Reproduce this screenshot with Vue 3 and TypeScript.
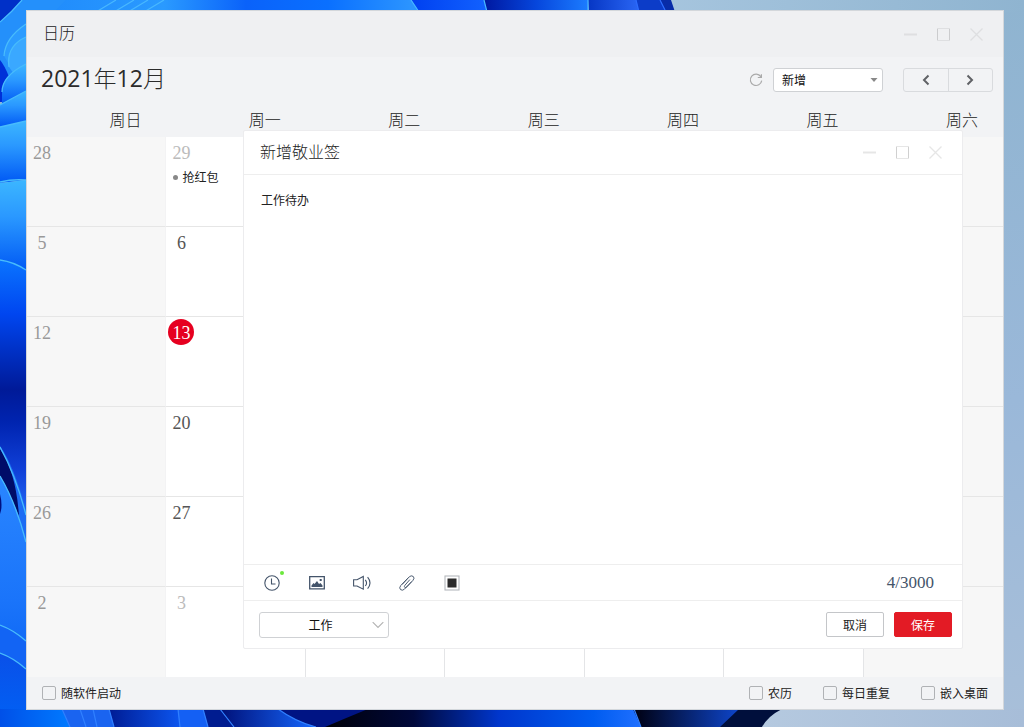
<script setup lang="ts">
import { ref } from 'vue'

interface Day {
  label?: string
  muted?: boolean
  today?: boolean
  event?: string
}

const weekdays: string[] = ['周日', '周一', '周二', '周三', '周四', '周五', '周六']

const leading: Day[][] = [
  [{ label: '28' }, { label: '29', muted: true, event: '抢红包' }],
  [{ label: '5' }, { label: '6' }],
  [{ label: '12' }, { label: '13', today: true }],
  [{ label: '19' }, { label: '20' }],
  [{ label: '26' }, { label: '27' }],
  [{ label: '2' }, { label: '3', muted: true }],
]
const weeks: Day[][] = leading.map((days) => [...days, {}, {}, {}, {}, {}])

const rightOptions: string[] = ['农历', '每日重复', '嵌入桌面']
const note = ref('工作待办')
const action = ref('新增')
const category = ref('工作')
</script>

<template>
  <div class="desktop">
    <svg class="wallpaper" viewBox="0 0 1024 727" preserveAspectRatio="none" aria-hidden="true">
      <defs>
        <linearGradient id="sky" x1="0" y1="0" x2="0" y2="1">
          <stop offset="0" stop-color="#8fb4d0" /><stop offset=".55" stop-color="#9ab8d9" /><stop offset="1" stop-color="#a8bfd9" />
        </linearGradient>
        <linearGradient id="skyTop"><stop offset="0" stop-color="#a6c5de" /><stop offset="1" stop-color="#8fb4d0" /></linearGradient>
        <linearGradient id="skyBottom"><stop offset="0" stop-color="#b6cae0" /><stop offset="1" stop-color="#a7bdd8" /></linearGradient>
        <linearGradient id="topBlue" gradientUnits="userSpaceOnUse" x1="0" y1="0" x2="410" y2="0">
          <stop offset="0" stop-color="#1c86fb" /><stop offset=".4" stop-color="#2a9aff" /><stop offset=".6" stop-color="#0a62fa" /><stop offset=".8" stop-color="#0a70ff" /><stop offset="1" stop-color="#2b94ff" />
        </linearGradient>
        <linearGradient id="p1"><stop offset="0" stop-color="#0040f0" /><stop offset="1" stop-color="#1262ff" /></linearGradient>
        <linearGradient id="p2"><stop offset="0" stop-color="#0018a0" /><stop offset=".5" stop-color="#0646dc" /><stop offset="1" stop-color="#1c7cff" /></linearGradient>
        <linearGradient id="p3"><stop offset="0" stop-color="#0636c4" /><stop offset="1" stop-color="#2a66f4" /></linearGradient>
        <linearGradient id="leftA" x1="0" y1="0" x2="0" y2="1"><stop offset="0" stop-color="#3cb6ff" /><stop offset=".4" stop-color="#2a98ff" /><stop offset="1" stop-color="#0058f4" /></linearGradient>
        <linearGradient id="leftDeep" gradientUnits="userSpaceOnUse" x1="0" y1="260" x2="0" y2="530">
          <stop offset="0" stop-color="#0a74ff" /><stop offset=".2" stop-color="#0046f0" /><stop offset=".48" stop-color="#001a98" /><stop offset=".6" stop-color="#0024b0" /><stop offset=".78" stop-color="#1040d8" /><stop offset="1" stop-color="#2a78ff" />
        </linearGradient>
        <linearGradient id="leftLow" x1="0" y1="0" x2="0" y2="1"><stop offset="0" stop-color="#2a86ff" /><stop offset=".5" stop-color="#1a74fa" /><stop offset="1" stop-color="#0058f0" /></linearGradient>
        <linearGradient id="leftEnd" x1="0" y1="0" x2="0" y2="1"><stop offset="0" stop-color="#0a50e8" /><stop offset="1" stop-color="#0062f6" /></linearGradient>
        <linearGradient id="b1"><stop offset="0" stop-color="#0050e8" /><stop offset="1" stop-color="#007aff" /></linearGradient>
        <linearGradient id="b2"><stop offset="0" stop-color="#001c94" /><stop offset="1" stop-color="#0c56f0" /></linearGradient>
        <linearGradient id="b3"><stop offset="0" stop-color="#001078" /><stop offset="1" stop-color="#1668ff" /></linearGradient>
        <linearGradient id="b4"><stop offset="0" stop-color="#000008" /><stop offset=".28" stop-color="#00083a" /><stop offset=".55" stop-color="#0036cc" /><stop offset=".85" stop-color="#005cf0" /><stop offset="1" stop-color="#2070ff" /></linearGradient>
        <linearGradient id="b5"><stop offset="0" stop-color="#000010" /><stop offset="1" stop-color="#0e46cc" /></linearGradient>
      </defs>

      <rect width="1024" height="727" fill="url(#sky)" />
      <rect x="660" width="364" height="12" fill="url(#skyTop)" />
      <rect x="740" y="709" width="284" height="18" fill="url(#skyBottom)" />

      <path d="M0 0H412L420 12H0Z" fill="url(#topBlue)" />
      <path d="M411 0H484L488 12H419Z" fill="url(#p1)" />
      <path d="M484 0H588V12H487Z" fill="url(#p2)" />
      <path d="M588 0H636L639 12H589Z" fill="url(#p3)" />
      <path d="M636 0H660L666 12H639Z" fill="#0c3cc8" />
      <path d="M660 0H671L675 12H666Z" fill="#082ca8" />
      <g fill="none" stroke="#48b8ff" stroke-width="1.2">
        <path d="M411 0L419 12M484 0L487 12M588 0V12" />
        <path d="M96 12L116 0M114 12L134 0M128 12L148 0M144 12L164 0" />
        <path d="M636 0L639 12M660 0L666 12" stroke="#2c6cff" />
      </g>

      <path d="M0 0H66Q34 30 26 64V92H0Z" fill="#2490fb" />
      <path d="M0 0H22Q12 12 0 22Z" fill="#0030c8" />
      <path d="M0 60Q5 66 9 77L2 102H0Z" fill="#0030d8" />
      <path d="M26 24Q5 38 4 56Q10 66 13 72L26 64Z" fill="#2c9cff" />
      <path d="M26 37Q6 46 9 67L14 74L26 66Z" fill="#3aa8ff" />
      <path d="M26 64Q2 76 2 90V105L26 92Z" fill="url(#leftA)" />
      <path d="M0 105L26 91V122L0 127Z" fill="url(#leftA)" />
      <path d="M0 127L26 121V180L0 183Z" fill="url(#leftA)" />
      <path d="M0 183L26 180V272L0 261Z" fill="url(#leftA)" />
      <path d="M0 260Q14 262 26 270V530L0 448Z" fill="url(#leftDeep)" />
      <path d="M0 446Q14 466 26 510V545L0 480Z" fill="#1c6cf4" />
      <path d="M0 449Q16 472 19 516Q8 490 0 476Z" fill="#000c68" />
      <path d="M0 476Q16 503 26 542V727H0Z" fill="url(#leftLow)" />
      <path d="M0 625Q14 628 26 641V670L0 655Z" fill="#1264f4" />
      <path d="M0 653Q14 658 26 669V727H0Z" fill="url(#leftEnd)" />
      <path d="M0 494Q3 506 0 514Z" fill="#001080" />
      <g fill="none" stroke="#48bcfc" stroke-width="1.3">
        <path d="M0 22Q12 12 22 0M26 24Q5 38 4 56M26 37Q6 46 9 67M26 64Q2 76 2 92M0 105L26 91M0 127L26 121M0 182Q12 179 26 180M0 260Q14 262 26 270" />
        <path d="M0 447Q16 476 26 515M0 476Q16 503 26 542M0 625Q14 630 26 641M0 653Q14 658 26 669" />
      </g>

      <path d="M0 709H70V727H0Z" fill="url(#b1)" />
      <path d="M62 709H109L115 727H70Z" fill="#1a64f0" />
      <path d="M109 709H178L181 727H114Z" fill="url(#b2)" />
      <path d="M178 709H203L208 727H180Z" fill="#1460f4" />
      <path d="M203 709H220L234 727H208Z" fill="#001c90" />
      <path d="M220 709H280Q296 722 316 727H234Z" fill="url(#b3)" />
      <path d="M278 709H370L340 727H316Q296 722 278 709Z" fill="#001484" />
      <path d="M368 709H634L641 727H325Q346 718 368 709Z" fill="url(#b4)" />
      <path d="M633 709H740L722 727H641Z" fill="url(#b5)" />
      <path d="M739 709H782Q768 716 762 727H720Z" fill="#000f3c" />
      <path d="M62 709L70 727M80 709L86 727M93 709L97 727M109 709L114 727M178 709L180 727M203 709L208 727M220 709L234 727M278 709Q296 722 316 727M634 709L641 727" fill="none" stroke="#3080ff" stroke-width="1.2" />
    </svg>

    <main class="window">
      <header class="titlebar">
        <h1>日历</h1>
        <div class="controls">
          <button type="button" aria-label="最小化"><svg viewBox="0 0 13 13"><path d="M0 6.5H13" stroke-width="2" /></svg></button>
          <button type="button" aria-label="最大化"><svg viewBox="0 0 13 13"><path class="side" d="M.5 0V13M12.5 0V13" /><path d="M0 .5H13M0 12.5H13" /></svg></button>
          <button type="button" aria-label="关闭"><svg viewBox="0 0 13 13"><path d="M.5 .5L12.5 12.5M12.5 .5L.5 12.5" stroke-width="1.3" /></svg></button>
        </div>
      </header>

      <section class="toolbar">
        <h2>2021<span>年</span>12<span>月</span></h2>
        <button class="refresh" type="button" aria-label="刷新">
          <svg viewBox="0 0 14 14"><path d="M11.8 3.6A5.7 5.7 0 1 0 12.7 7.6M12.4 1.2V4.5H8.8" /></svg>
        </button>
        <div class="picker action">
          <select v-model="action" aria-label="新增"><option>新增</option></select>
          <svg viewBox="0 0 8 5"><path d="M.5 .5H7.5L4 4.5Z" fill="#888" /></svg>
        </div>
        <div class="pager">
          <button type="button" aria-label="上个月"><svg viewBox="0 0 10 12"><path d="M7.5 1.5L3 6L7.5 10.5" /></svg></button>
          <button type="button" aria-label="下个月"><svg viewBox="0 0 10 12"><path d="M2.5 1.5L7 6L2.5 10.5" /></svg></button>
        </div>
      </section>

      <table class="calendar">
        <thead>
          <tr><th v-for="name in weekdays" :key="name" scope="col">{{ name }}</th></tr>
        </thead>
        <tbody>
          <tr v-for="(week, w) in weeks" :key="w">
            <td v-for="(day, d) in week" :key="d" :class="{ weekend: d === 0 || d === 6, muted: day.muted }">
              <span v-if="day.label" class="date" :class="{ today: day.today }">{{ day.label }}</span>
              <div v-if="day.event" class="event">{{ day.event }}</div>
            </td>
          </tr>
        </tbody>
      </table>

      <footer class="options">
        <label class="first"><input type="checkbox" />随软件启动</label>
        <label v-for="name in rightOptions" :key="name"><input type="checkbox" />{{ name }}</label>
      </footer>

      <section class="dialog" role="dialog" aria-labelledby="dialog-title">
        <header class="dialog-head">
          <h3 id="dialog-title">新增敬业签</h3>
          <div class="controls">
            <button type="button" aria-label="最小化"><svg viewBox="0 0 13 13"><path d="M0 6.5H13" stroke-width="2" /></svg></button>
            <button type="button" aria-label="最大化"><svg viewBox="0 0 13 13"><path class="side" d="M.5 0V13M12.5 0V13" /><path d="M0 .5H13M0 12.5H13" /></svg></button>
            <button type="button" aria-label="关闭"><svg viewBox="0 0 13 13"><path d="M.5 .5L12.5 12.5M12.5 .5L.5 12.5" stroke-width="1.3" /></svg></button>
          </div>
        </header>
        <textarea v-model="note" aria-label="内容"></textarea>
        <div class="tools">
          <button type="button" aria-label="提醒">
            <svg viewBox="0 0 16 16"><circle cx="8" cy="8" r="7.2" /><path d="M7.5 3.5V9H11.5" /></svg>
            <i class="dot"></i>
          </button>
          <button type="button" aria-label="图片">
            <svg viewBox="0 0 16 16"><path d="M.7 1.7H15.3V13.8H.7Z" stroke-width="1.3" /><path d="M2.5 12V10.5L4.5 8L5.5 9L8 6L10 9L11.5 8L13.5 10.5V12Z" fill="#44546a" stroke="none" /><path d="M10.7 4H12.7V6H10.7Z" fill="#44546a" stroke="none" /></svg>
          </button>
          <button type="button" aria-label="语音">
            <svg class="wide" viewBox="0 0 18 16"><path d="M.6 4.7H4L10.3 1.5V14.2L4 11H.6Z" /><path d="M12.3 4.8Q14.8 7.9 12.3 11M14.6 2.2Q19.4 7.9 14.6 13.6" /></svg>
          </button>
          <button type="button" aria-label="附件">
            <svg viewBox="0 0 16 16"><path stroke-width=".95" stroke-linecap="round" d="M10.6 4.9L5.9 10.3Q4.9 11.7 5.8 12.4Q6.8 13 7.8 11.9L14 5.3Q16 3 14.2 1.4Q12.2 0 10.2 1.9L1.7 10.6Q-.2 13 1.5 14.6Q3.4 16 5.4 14.2L12.3 7M8.6 3.6L3.4 9.2" /></svg>
          </button>
          <button type="button" aria-label="颜色">
            <svg viewBox="0 0 16 16"><rect x="1" y="1" width="14" height="14" stroke="#b5b8bd" /><rect x="3.5" y="3.5" width="9" height="9" fill="#2b2b2b" stroke="none" /></svg>
          </button>
          <output class="count">{{ note.length }}/3000</output>
        </div>
        <footer class="dialog-foot">
          <div class="picker category">
            <select v-model="category" aria-label="分类"><option>工作</option></select>
            <svg viewBox="0 0 12 7"><path d="M.7 .7L6 6L11.3 .7" fill="none" stroke="#b4b4b4" stroke-width="1.2" /></svg>
          </div>
          <button class="btn" type="button">取消</button>
          <button class="btn primary" type="button">保存</button>
        </footer>
      </section>
    </main>
  </div>
</template>

<style>
body {
  margin: 0;
}
</style>

<style scoped>
* {
  box-sizing: border-box;
}
.desktop {
  position: relative;
  display: flex;
  min-height: 100vh;
  padding: 10px 20px 17px 26px;
  overflow: hidden;
  font-family: "Noto Sans CJK SC", sans-serif;
  font-weight: 400;
  font-size: 12px;
  color: #222;
}
.wallpaper {
  position: absolute;
  inset: 0;
  width: 100%;
  height: 100%;
}
.window {
  position: relative;
  flex: 1;
  display: flex;
  flex-direction: column;
  background: #f2f3f5;
  border: 1px solid #d3d7db;
}
h1, h2, h3 {
  margin: 0;
  font-weight: 300;
}
button, select, textarea {
  font: inherit;
  color: inherit;
}
button {
  display: flex;
  align-items: center;
  justify-content: center;
  padding: 0;
  border: 0;
  background: none;
}
svg {
  display: block;
}
.titlebar {
  display: flex;
  align-items: center;
  justify-content: space-between;
  height: 46px;
  padding: 0 20px 0 16px;
  background: #eff0f2;
}
h1, h3 {
  padding-bottom: 4px;
  font-size: 16px;
  line-height: 24px;
}
.controls {
  display: flex;
  gap: 20px;
}
.controls svg {
  width: 13px;
  height: 13px;
  fill: none;
  stroke: #dedfe1;
}
.controls .side {
  stroke: #cbccce;
}
.toolbar {
  display: flex;
  align-items: center;
  height: 46px;
  padding: 0 10px 0 14px;
}
h2 {
  flex: 1;
  padding-bottom: 4px;
  font-family: "Open Sans", "Noto Sans CJK SC", sans-serif;
  font-size: 23px;
  font-weight: 400;
  line-height: 32px;
  color: #2b2b2b;
}
h2 span {
  font-weight: 300;
}
.refresh {
  margin-right: 10px;
}
.refresh svg {
  width: 14px;
  height: 14px;
  fill: none;
  stroke: #aaa;
  stroke-width: 1.2;
}
.picker {
  position: relative;
}
.picker select {
  appearance: none;
  display: block;
  width: 100%;
  margin: 0;
  padding: 0 8px 2px;
  border: 1px solid #cfd1d4;
  border-radius: 3px;
  background: #fff;
  color: #111;
}
.picker svg {
  position: absolute;
  top: 50%;
  right: 5px;
  width: 8px;
  height: 5px;
  transform: translateY(-50%);
  pointer-events: none;
}
.action {
  width: 110px;
  margin-right: 20px;
}
.action select {
  height: 24px;
}
.pager {
  display: flex;
  width: 90px;
  height: 24px;
  border: 1px solid #d9dbde;
  border-radius: 3px;
}
.pager button {
  flex: 1;
}
.pager button + button {
  border-left: 1px solid #d9dbde;
}
.pager svg {
  width: 10px;
  height: 12px;
  fill: none;
  stroke: #606266;
  stroke-width: 2;
}
.calendar {
  flex: 1;
  width: 100%;
  table-layout: fixed;
  border-collapse: separate;
  border-spacing: 0;
}
th {
  height: 34px;
  padding: 0 25px 2px 0;
  font-size: 16px;
  font-weight: 300;
  line-height: 24px;
  text-align: right;
}
td {
  height: 90px;
  padding: 2px 2px 0;
  border-right: 1px solid #e4e5e7;
  border-bottom: 1px solid #e6e6e6;
  background: #fff;
  vertical-align: top;
  color: #555;
}
td.weekend {
  background: #f7f7f7;
  border-right-color: #f3f3f4;
  color: #999;
}
td:last-child {
  border-right: 0;
}
td.muted {
  color: #bbb;
}
tbody tr:last-child td {
  border-bottom: 0;
}
.date {
  display: block;
  width: 26px;
  height: 26px;
  border-radius: 50%;
  font-family: "Liberation Serif", serif;
  font-size: 18px;
  line-height: 28px;
  text-align: center;
}
.date.today {
  background: #e60020;
  color: #fff;
}
.event {
  display: flex;
  align-items: center;
  gap: 4px;
  padding: 2px 0 0 5px;
  line-height: 20px;
  color: #222;
}
.event::before {
  content: "";
  width: 5px;
  height: 5px;
  border-radius: 50%;
  background: #888;
}
.options {
  display: flex;
  align-items: center;
  gap: 31px;
  height: 32px;
  padding: 0 15px;
}
.options label {
  display: flex;
  align-items: center;
  gap: 5px;
  line-height: 18px;
}
.options .first {
  margin-right: auto;
}
.options input {
  appearance: none;
  width: 14px;
  height: 14px;
  margin: 0;
  border: 1px solid #b0b2b5;
  border-radius: 2px;
}
.dialog {
  position: absolute;
  top: 119px;
  right: 40px;
  bottom: 60px;
  left: 216px;
  display: flex;
  flex-direction: column;
  background: #fff;
  border: 1px solid #ececee;
  border-radius: 2px;
}
.dialog-head {
  display: flex;
  align-items: center;
  justify-content: space-between;
  height: 44px;
  padding: 0 20px 0 16px;
  border-bottom: 1px solid #eee;
}
.dialog .controls svg {
  stroke: #e6e6e6;
}
.dialog .controls .side {
  stroke: #d0d0d0;
}
textarea {
  flex: 1;
  width: 100%;
  padding: 15px 17px;
  border: 0;
  outline: 0;
  resize: none;
  background: none;
  line-height: 20px;
}
.tools {
  display: flex;
  align-items: center;
  gap: 29px;
  height: 36px;
  padding: 0 28px 0 20px;
  border-top: 1px solid #eee;
}
.tools button {
  position: relative;
  width: 16px;
  height: 16px;
}
.tools svg {
  flex: none;
  width: 16px;
  height: 16px;
  fill: none;
  stroke: #44546a;
  stroke-width: 1.1;
}
.tools .wide {
  width: 18px;
}
.dot {
  position: absolute;
  top: -4px;
  right: -4px;
  width: 4px;
  height: 4px;
  border-radius: 50%;
  background: #6be83c;
}
.count {
  margin-left: auto;
  font-family: "Liberation Serif", serif;
  font-size: 17px;
  color: #44546a;
}
.dialog-foot {
  display: flex;
  align-items: center;
  gap: 10px;
  height: 48px;
  padding: 0 10px 0 15px;
  border-top: 1px solid #eee;
}
.category {
  width: 130px;
  margin-right: auto;
}
.category select {
  height: 26px;
  padding: 0 14px 0 7px;
  text-align-last: center;
}
.category svg {
  width: 12px;
  height: 7px;
}
.btn {
  width: 58px;
  height: 25px;
  border: 1px solid #c4c6c9;
  border-radius: 2px;
  background: #fff;
}
.btn.primary {
  border-color: #e31b25;
  background: #e31b25;
  color: #fff;
}
</style>
